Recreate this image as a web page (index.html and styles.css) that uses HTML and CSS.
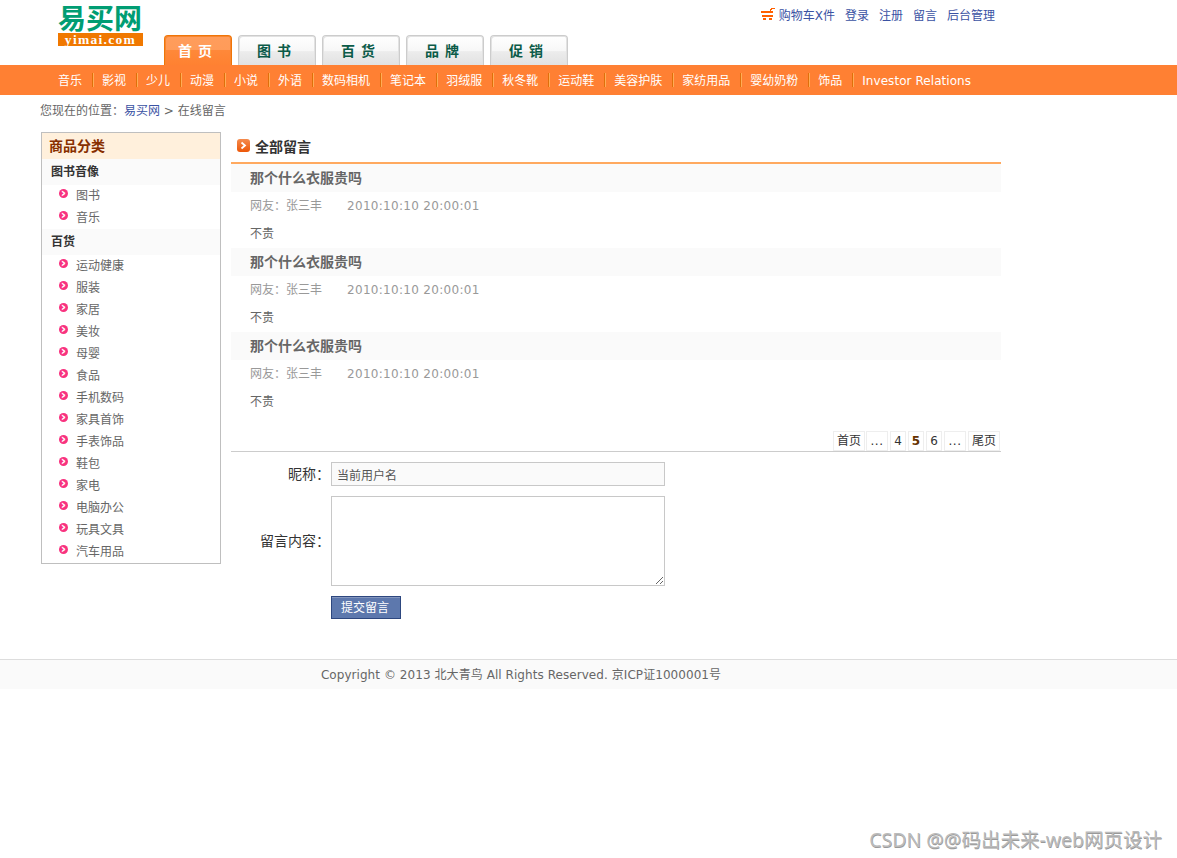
FILE: index.html
```html
<!doctype html>
<html lang="zh-CN">
<head>
<meta charset="utf-8">
<title>易买网 - 在线留言</title>
<link rel="stylesheet" href="styles.css">
</head>
<body>
<div id="header" class="wrap">
	<div id="logo">
		<strong>易买网</strong>
		<span>yimai.com</span>
	</div>
	<ul class="tabs">
		<li class="current"><a href="#">首页</a></li>
		<li><a href="#">图书</a></li>
		<li><a href="#">百货</a></li>
		<li><a href="#">品牌</a></li>
		<li><a href="#">促销</a></li>
	</ul>
	<div class="help">
		<a href="#" class="shopping"><svg width="14" height="13" viewBox="0 0 14 13" shape-rendering="crispEdges"><path d="M10 0h4v1h-3v1h-1v1h-1V1h1zM0 3h12v2H0zM1 7h11v2H1zM2 10h3v2H2zM8 10h3v2H8z" fill="#ff6000"/></svg>购物车X件</a>
		<a href="#">登录</a>
		<a href="#">注册</a>
		<a href="#">留言</a>
		<a href="#">后台管理</a>
	</div>
</div>
<div id="childNav">
	<ul class="wrap">
		<li><a href="#">音乐</a></li>
		<li><a href="#">影视</a></li>
		<li><a href="#">少儿</a></li>
		<li><a href="#">动漫</a></li>
		<li><a href="#">小说</a></li>
		<li><a href="#">外语</a></li>
		<li><a href="#">数码相机</a></li>
		<li><a href="#">笔记本</a></li>
		<li><a href="#">羽绒服</a></li>
		<li><a href="#">秋冬靴</a></li>
		<li><a href="#">运动鞋</a></li>
		<li><a href="#">美容护肤</a></li>
		<li><a href="#">家纺用品</a></li>
		<li><a href="#">婴幼奶粉</a></li>
		<li><a href="#">饰品</a></li>
		<li class="last"><a href="#">Investor Relations</a></li>
	</ul>
</div>
<div id="position" class="wrap">您现在的位置：<a href="#">易买网</a> &gt; 在线留言</div>
<div id="main" class="wrap">
	<div class="side">
		<h2>商品分类</h2>
		<dl>
			<dt>图书音像</dt>
			<dd><a href="#">图书</a></dd>
			<dd><a href="#">音乐</a></dd>
			<dt>百货</dt>
			<dd><a href="#">运动健康</a></dd>
			<dd><a href="#">服装</a></dd>
			<dd><a href="#">家居</a></dd>
			<dd><a href="#">美妆</a></dd>
			<dd><a href="#">母婴</a></dd>
			<dd><a href="#">食品</a></dd>
			<dd><a href="#">手机数码</a></dd>
			<dd><a href="#">家具首饰</a></dd>
			<dd><a href="#">手表饰品</a></dd>
			<dd><a href="#">鞋包</a></dd>
			<dd><a href="#">家电</a></dd>
			<dd><a href="#">电脑办公</a></dd>
			<dd><a href="#">玩具文具</a></dd>
			<dd><a href="#">汽车用品</a></dd>
		</dl>
	</div>
	<div class="guestbook">
		<h2><i><svg width="13" height="13" viewBox="0 0 13 13"><path d="M4.500 3.500l3.500 3-3.500 3" fill="none" stroke="#fff" stroke-width="1.800"/></svg></i>全部留言</h2>
		<ul class="list">
			<li>
				<h3>那个什么衣服贵吗</h3>
				<p class="info">网友：张三丰<span>2010:10:10 20:00:01</span></p>
				<p>不贵</p>
			</li>
			<li>
				<h3>那个什么衣服贵吗</h3>
				<p class="info">网友：张三丰<span>2010:10:10 20:00:01</span></p>
				<p>不贵</p>
			</li>
			<li>
				<h3>那个什么衣服贵吗</h3>
				<p class="info">网友：张三丰<span>2010:10:10 20:00:01</span></p>
				<p>不贵</p>
			</li>
		</ul>
		<ul class="pager">
			<li class="w32"><a href="#">首页</a></li>
			<li class="w22">...</li>
			<li><a href="#">4</a></li>
			<li class="now">5</li>
			<li><a href="#">6</a></li>
			<li class="w22">...</li>
			<li class="w32"><a href="#">尾页</a></li>
		</ul>
		<form class="reply">
			<label for="guestName">昵称：</label>
			<input type="text" class="text" id="guestName" value="当前用户名" readonly>
			<label for="guestContent">留言内容：</label>
			<textarea id="guestContent"></textarea>
			<button type="button">提交留言</button>
		</form>
	</div>
</div>
<div id="footer"><p class="wrap">Copyright © 2013 北大青鸟 All Rights Reserved. <span>京ICP证1000001号</span></p></div>
<div class="mark">CSDN @@码出未来-web网页设计</div>
</body>
</html>
```
FILE: styles.css
```css
body,h2,h3,p,ul,li,dl,dt,dd,form,input,textarea,button{ margin:0; padding:0;}
body{ font:12px/22px Verdana,"DejaVu Sans","Noto Sans CJK SC",sans-serif; color:#666; background:#fff; overflow:hidden;}
ul,li{ list-style:none;}
a{ color:inherit; text-decoration:none;}
.wrap{ width:960px; margin-left:41px;}

#header{ height:65px; display:flex;}
#logo{ width:85px; padding:3px 0 0 17px; font-family:"Noto Sans CJK SC",sans-serif;}
#logo strong{ display:block; height:30px; line-height:28px; font-size:28px; font-weight:bold; color:#009d73; white-space:nowrap;}
#logo span{ display:block; height:13px; line-height:13px; background:#f07800; color:#fff; text-align:center; font-family:"Liberation Serif",serif; font-weight:bold; font-size:13.5px; letter-spacing:1.3px;}
.tabs{ display:flex; gap:6px; padding:35px 0 0 21px;}
.tabs li{ box-sizing:border-box; width:78px; height:30px; border:1px solid #ccc; border-bottom:0; border-radius:4px 4px 0 0; box-shadow:inset 1px 1px #e2e2e2,inset -1px 0 #e2e2e2; background:linear-gradient(#fff,#f7f7f7 50%,#ececec 54%,#e2e2e2); text-align:center; font-size:14px; font-weight:bold; line-height:31px; letter-spacing:6px; color:#0b5b48;}
.tabs .current{ width:68px; border-color:#ef7508; box-shadow:inset 1px 1px #f88630,inset -1px 0 #f88630; background:linear-gradient(#ff9d5c,#ff9b59 50%,#ff8839 50%,#ff8131); color:#fff;}
.help{ display:flex; gap:10px; margin-left:auto; padding:5px 6px 0 0; color:#3a52a3; height:22px;}
.shopping{ display:flex; gap:4px;}
.shopping svg{ margin-top:3px;}

#childNav{ height:30px; background:#ff8033; color:#fff;}
#childNav ul{ display:flex; padding-left:9px;}
#childNav li{ display:flex; align-items:center; height:30px; padding-left:8px; white-space:nowrap;}
#childNav a{ padding-top:2px;}
#childNav li:after{ content:""; width:1px; height:14px; margin-left:10px; background:#df6f0a; border-right:1px solid #ffac56;}
#childNav .last:after{ display:none;}
#childNav .last{ letter-spacing:.06px;}
#position{ height:36px; padding-top:1px; margin-left:40px; line-height:31px;}
#position a{ color:#3a52a3;}

#main{ display:flex; gap:10px; height:527px; align-items:flex-start;}
.side{ width:178px; border:1px solid #bfbfbf;}
.side h2{ height:26px; line-height:27px; padding-left:7px; background:#fff0dc; color:#882f00; font-size:14px;}
.side dt{ height:26px; line-height:27px; padding-left:9px; background:#fafafa; color:#333; font-weight:bold;}
.side dd{ display:flex; height:22px; line-height:23px; padding-left:17px;}
.side dd:before{ content:"›"; width:9px; height:9px; margin:4px 8px 0 0; border-radius:50%; background:#f8327f; color:#fff; font:bold 13px/7px "DejaVu Sans",sans-serif; text-align:center;}

.guestbook{ width:770px;}
.guestbook h2{ display:flex; height:30px; line-height:30px; padding-left:6px; border-bottom:2px solid #ffa95f; color:#333; font-size:14px;}
.guestbook h2 i{ width:13px; height:13px; margin:7px 5px 0 0; border-radius:3px; background:linear-gradient(#f48b4e,#ed5708); line-height:0;}
.list li{ height:84px;}
.list h3{ height:28px; line-height:28px; padding-left:19px; background:#fafafa; font-size:14px;}
.list p{ height:28px; line-height:29px; padding-left:19px;}
.list .info{ color:#999;}
.info span{ margin-left:25px; letter-spacing:.3px;}
.pager{ display:flex; justify-content:flex-end; gap:2px; height:20px; padding:15px 1px 0 0; border-bottom:1px solid #ccc; color:#333;}
.pager li{ box-sizing:border-box; width:16px; height:20px; line-height:18px; border:1px solid #eee; text-align:center;}
.pager .w32{ width:32px;}
.pager .w32:first-child{ width:32px; margin-right:-1px;}
.pager .w22{ width:22px; letter-spacing:.6px;}
.pager .now{ font-weight:bold; color:#630;}
.reply{ display:grid; grid-template-columns:100px 334px; row-gap:10px; padding-top:10px; align-items:center;}
.reply label{ padding-right:1px; text-align:right; font-size:14px; color:#333; white-space:nowrap;}
.reply input,.reply textarea{ box-sizing:border-box; width:334px; height:24px; border:1px solid #c8c8c8; padding:0 5px; font:inherit; color:#555; background:#fafafa; outline:none;}
.reply textarea{ display:block; height:90px; background:#fff;}
.reply button{ grid-column:2; width:70px; height:23px; padding-right:2px; border:1px solid #2d477f; background:#5d78ad; box-shadow:inset 0 1px #8496bd; color:#fff; font:inherit; line-height:20px;}

#footer{ height:29px; border-top:1px solid #ddd; background:#fafafa; text-align:center; line-height:31px;}
#footer p{ height:29px; letter-spacing:.06px;}
.mark{ position:absolute; right:15px; bottom:4px; font:19.5px/28px "Noto Sans","Noto Sans CJK SC",sans-serif; color:#bbb; text-shadow:.5px .5px #999; white-space:nowrap;}
```
